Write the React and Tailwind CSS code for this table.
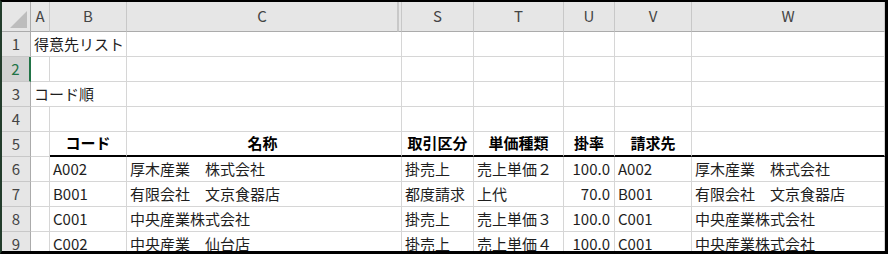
import React from 'react'

const FONT = { fontFamily: '"Noto Sans CJK JP", "Noto Sans", sans-serif' }

const colLetters = ['A', 'B', 'C', '', 'S', 'T', 'U', 'V', 'W']

// body rows: A, B, C, (hidden D-R), S, T, U, V, W
const rows = [
  { n: 1, cells: ['得意先リスト'], overflow: true },
  { n: 2, cells: [], active: true },
  { n: 3, cells: ['コード順'], overflow: true },
  { n: 4, cells: [] },
  { n: 5, header: true, cells: ['', 'コード', '名称', '', '取引区分', '単価種類', '掛率', '請求先', ''] },
  { n: 6, cells: ['', 'A002', '厚木産業　株式会社', '', '掛売上', '売上単価２', '100.0', 'A002', '厚木産業　株式会社'] },
  { n: 7, cells: ['', 'B001', '有限会社　文京食器店', '', '都度請求', '上代', '70.0', 'B001', '有限会社　文京食器店'] },
  { n: 8, cells: ['', 'C001', '中央産業株式会社', '', '掛売上', '売上単価３', '100.0', 'C001', '中央産業株式会社'] },
  { n: 9, cells: ['', 'C002', '中央産業　仙台店', '', '掛売上', '売上単価４', '100.0', 'C001', '中央産業株式会社'] },
]

function HeaderCell({ children, className = '' }) {
  return (
    <div
      className={`flex items-center justify-center bg-[#e6e6e6] border-r border-r-[#c8c8c8] border-b border-b-[#ababab] text-[15px] text-[#444] ${className}`}
    >
      {children}
    </div>
  )
}

function RowHead({ n, active }) {
  return (
    <div
      className={
        active
          ? 'flex items-center justify-center bg-[#d2d2d2] border-r-2 border-r-[#217346] border-b border-b-[#c8c8c8] text-[15px] text-[#217346]'
          : 'flex items-center justify-center bg-[#e6e6e6] border-r border-r-[#ababab] border-b border-b-[#c8c8c8] text-[15px] text-[#444]'
      }
    >
      {n}
    </div>
  )
}

function BodyRow({ row }) {
  const out = []
  for (let i = 0; i < 9; i++) {
    const text = row.cells[i] || ''
    const isHidden = i === 3
    const isNumber = i === 6 && !row.header
    let cls = 'flex items-center whitespace-nowrap text-[15px] text-[#1e1e1e] border-b '
    // text in column A spills over into B, so no divider there
    if (row.overflow && i === 0) {
      cls += 'overflow-visible relative z-10 '
    } else if (isHidden) {
      cls += 'border-r border-r-[#d6d6d6] '
    } else if (i !== 2) {
      cls += 'border-r border-r-[#d6d6d6] overflow-hidden '
    } else {
      cls += 'overflow-hidden '
    }
    if (row.header && i >= 1) {
      cls += 'border-b-2 border-b-black font-bold justify-center text-black '
    } else {
      cls += 'border-b-[#d6d6d6] '
    }
    if (isNumber) cls += 'justify-end pr-[4px] '
    else if (!row.header) cls += 'pl-[3px] '
    out.push(
      <div key={i} className={cls}>
        {text}
      </div>
    )
  }
  return out
}

export default function App() {
  return (
    <div className="w-[888px] h-[254px] bg-white overflow-hidden" style={FONT}>
      <div className="w-full h-full border-t-2 border-r-[3px] border-b-[3px] border-black border-l-2 border-l-[#233d2c] overflow-hidden">
        <div className="grid grid-cols-[29px_19px_77px_271px_4px_72px_90px_51px_77px_193px] grid-rows-[30px_repeat(9,25px)]">
          {/* select-all corner */}
          <div className="relative bg-[#e6e6e6] border-r border-r-[#ababab] border-b border-b-[#ababab]">
            <svg className="absolute right-[3px] bottom-[3px]" width="17" height="17" viewBox="0 0 17 17">
              <polygon points="17,0 17,17 0,17" fill="#bdbdbd" />
            </svg>
          </div>
          {colLetters.map((c, i) =>
            i === 3 ? (
              <div key={i} className="bg-[#e6e6e6] border-l border-l-[#c8c8c8] border-r border-r-[#c8c8c8] border-b border-b-[#ababab]" />
            ) : (
              <HeaderCell key={i}>{c}</HeaderCell>
            )
          )}
          {rows.map((row) => (
            <React.Fragment key={row.n}>
              <RowHead n={row.n} active={row.active} />
              <BodyRow row={row} />
            </React.Fragment>
          ))}
        </div>
      </div>
    </div>
  )
}
